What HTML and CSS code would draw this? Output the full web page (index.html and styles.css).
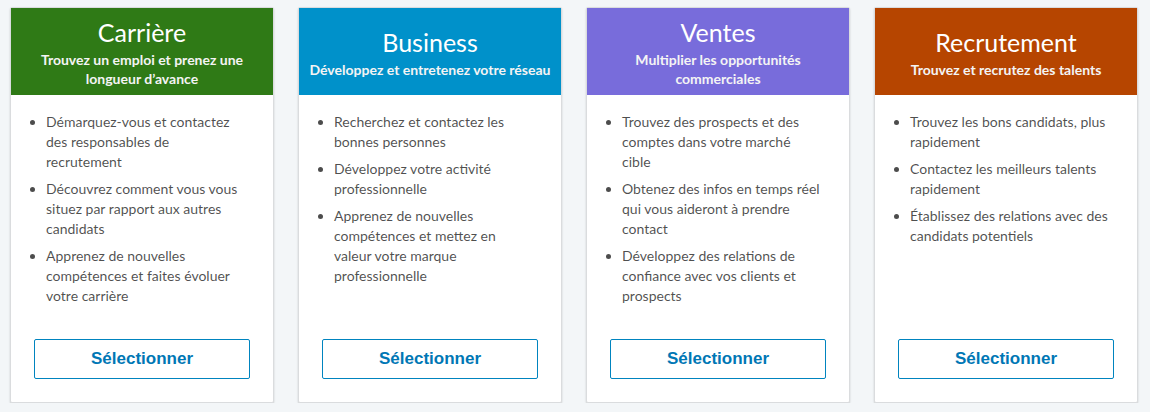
FILE: index.html
```html
<!DOCTYPE html>
<html lang="fr">
  <head>
    <meta charset="utf-8" />
    <meta name="viewport" content="width=device-width, initial-scale=1" />
    <title>Choisissez votre objectif</title>
    <link rel="stylesheet" href="styles.css">
  </head>
  <body>
    <div class="plans">
      <div class="plan">
        <div class="plan-head career">
          <h2 class="plan-title">Carrière</h2>
          <p class="plan-sub">Trouvez un emploi et prenez une longueur d’avance</p>
        </div>
        <div class="plan-body">
          <ul class="perks">
            <li>Démarquez-vous et contactez des responsables de recrutement</li>
            <li>Découvrez comment vous vous situez par rapport aux autres candidats</li>
            <li>Apprenez de nouvelles compétences et faites évoluer votre carrière</li>
          </ul>
          <button class="select-btn">Sélectionner</button>
        </div>
      </div>

      <div class="plan">
        <div class="plan-head business">
          <h2 class="plan-title">Business</h2>
          <p class="plan-sub">Développez et entretenez votre réseau</p>
        </div>
        <div class="plan-body">
          <ul class="perks">
            <li>Recherchez et contactez les bonnes personnes</li>
            <li>Développez votre activité professionnelle</li>
            <li>Apprenez de nouvelles compétences et mettez en valeur votre marque professionnelle</li>
          </ul>
          <button class="select-btn">Sélectionner</button>
        </div>
      </div>

      <div class="plan">
        <div class="plan-head sales">
          <h2 class="plan-title">Ventes</h2>
          <p class="plan-sub">Multiplier les opportunités commerciales</p>
        </div>
        <div class="plan-body">
          <ul class="perks">
            <li>Trouvez des prospects et des comptes dans votre marché cible</li>
            <li>Obtenez des infos en temps réel qui vous aideront à prendre contact</li>
            <li>Développez des relations de confiance avec vos clients et prospects</li>
          </ul>
          <button class="select-btn">Sélectionner</button>
        </div>
      </div>

      <div class="plan">
        <div class="plan-head hiring">
          <h2 class="plan-title">Recrutement</h2>
          <p class="plan-sub">Trouvez et recrutez des talents</p>
        </div>
        <div class="plan-body">
          <ul class="perks">
            <li>Trouvez les bons candidats, plus rapidement</li>
            <li>Contactez les meilleurs talents rapidement</li>
            <li>Établissez des relations avec des candidats potentiels</li>
          </ul>
          <button class="select-btn">Sélectionner</button>
        </div>
      </div>
    </div>
  </body>
</html>
```

FILE: styles.css
```css
html {
  background: #f3f6f8;
}
body {
  margin: 0;
  font-family: Lato, "Liberation Sans", sans-serif;
}

.plans {
  display: flex;
  gap: 24px;
  padding: 7px 0 0 10px;
}

/* one card per objective */
.plan {
  box-sizing: border-box;
  width: 264px;
  height: 396px;
  display: flex;
  flex-direction: column;
  background: #fff;
  border: 1px solid #dadcde;
  border-radius: 2px;
  box-shadow: 0 1px 2px rgba(0, 0, 0, 0.18);
}

.plan-head {
  height: 87px;
  flex: none;
  box-sizing: border-box;
  display: flex;
  flex-direction: column;
  justify-content: center;
  padding: 2px 8px 3px;
  color: #fff;
  text-align: center;
}
.career { background: #2f7a16; }
.business { background: #0091ca; }
.sales { background: #786cdb; }
.hiring { background: #b64500; }

.plan-title {
  margin: 0;
  font-size: 25px;
  font-weight: 400;
  line-height: 36px;
}
.plan-sub {
  margin: 0;
  font-size: 14px;
  font-weight: 700;
  line-height: 19px;
  color: #f4f4f4;
}

.plan-body {
  flex: 1;
  display: flex;
  flex-direction: column;
  padding: 17px 23px 23px;
}

.perks {
  margin: 0;
  /* keeps the wrapping a bit narrower than the button */
  padding: 0 4px 0 12px;
  font-size: 14px;
  line-height: 20px;
  color: rgba(0, 0, 0, 0.7);
}
.perks li + li {
  margin-top: 7px;
}

.select-btn {
  margin-top: auto;
  height: 40px;
  background: #fff;
  border: 1px solid #0084bf;
  border-radius: 2px;
  color: #0077b5;
  font-family: "Liberation Sans", Arial, sans-serif;
  font-size: 17px;
  font-weight: 700;
  cursor: pointer;
}
```
